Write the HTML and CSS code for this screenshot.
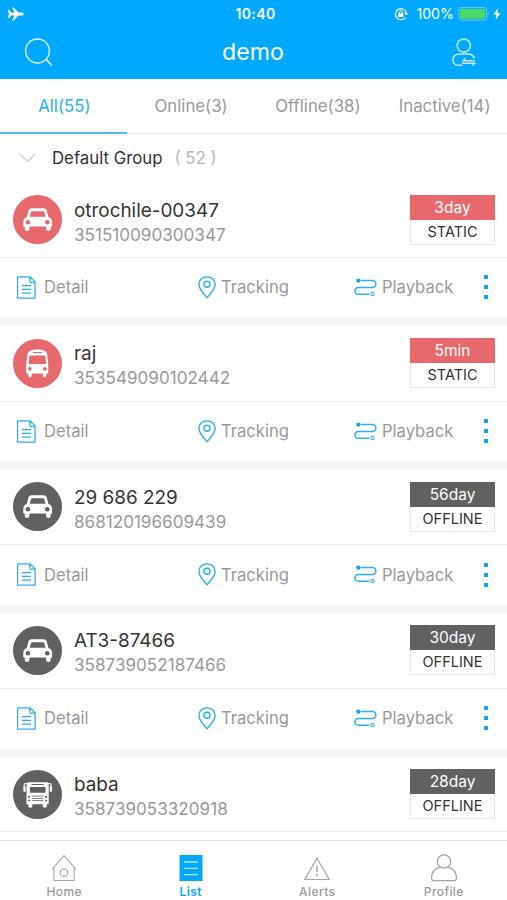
FILE: index.html
```html
<!DOCTYPE html>
<html lang="en">

<head>
    <meta charset="UTF-8">
    <meta name="viewport" content="width=device-width, initial-scale=1.0">
    <title>demo</title>
    <link rel="stylesheet" href="styles.css">
</head>

<body>
    <!-- shared icons -->
    <svg class="icon-defs" width="0" height="0">
        <symbol id="car" viewBox="0 0 49 49">
            <path fill="#fff" fill-rule="evenodd" d="M18.500 13.300h12.200c1.600 0 2.700.9 3.100 2.400l1.700 6.300c2.300.8 3.600 2.500 3.600 4.800v4.700h-1.400v2.300c0 2.900-4.600 2.900-4.600 0v-2.300H16.400v2.300c0 2.900-4.600 2.900-4.600 0v-2.300h-1.500v-4.700c0-2.300 1.300-4 3.500-4.800l1.600-6.300c.4-1.500 1.500-2.400 3.100-2.400zm.8 2.900c-.7 0-1.100.3-1.300 1L16.800 21.800h15.700l-1.200-4.600c-.2-.7-.6-1-1.300-1zM14.900 25a2.300 2.300 0 1 0 .01 0zM34.300 25a2.300 2.300 0 1 0 .01 0z" />
        </symbol>
        <symbol id="bus" viewBox="0 0 49 49">
            <path fill="#fff" fill-rule="evenodd" d="M16.500 12.300c3.500-2.500 12.500-2.500 16 0 1.200 1 1.600 2.200 1.800 4l1 9.500v8.800h-2v2c0 2.400-3.400 2.400-3.400 0v-2H18.700v2c0 2.400-3.400 2.400-3.400 0v-2h-2.200v-8.800l1.200-9.500c.2-1.800.9-3.200 2.200-4zm3.200.6v1.200h9.600v-1.200zM17.600 16.500c-.7 0-1 .3-1.100.9l-.8 6.500c-.1.700.2 1 .9 1h15.600c.7 0 1-.3.900-1l-.7-6.500c-.1-.6-.4-.9-1.100-.9zM16.900 28a1.900 1.900 0 1 0 .01 0zM31.800 28a1.900 1.900 0 1 0 .01 0z" />
        </symbol>
        <symbol id="coach" viewBox="0 0 49 49">
            <path fill="#fff" fill-rule="evenodd" d="M16 12.300h17.500c1.500 0 2.200.8 2.200 2.200v19.700h-2v2.300c0 .8-.4 1.100-1.100 1.100h-1.800c-.7 0-1-.4-1-1.100v-2.300H19.300v2.300c0 .7-.3 1.100-1 1.100h-1.800c-.7 0-1.100-.3-1.100-1.100v-2.300h-1.900V14.500c0-1.400.9-2.200 2.500-2.200zM18.500 13.900v1.100h12.300v-1.100zM16.900 17v5.700h15.600V17zM15.100 26v1.800h2V26zM32 26v1.800h2V26zM18.700 25.700v.9h11.800v-.9zM18.700 27.900v.9h11.800v-.9zM15.100 29.700v1.500h2v-1.500zM18.700 30.200v.9h11.800v-.9zM32 29.700v1.500h2v-1.500z" />
            <path fill="none" stroke="#fff" stroke-width="1.200" d="M14 13.500h-1.500q-1.300 0-1.300 1.300v6M35 13.500h1.800q1.300 0 1.300 1.300v6" />
            <path fill="#fff" d="M10.500 16.500h2.100v5.200h-2.100zM36.800 16.500h2.100v5.200h-2.100z" />
        </symbol>
        <symbol id="detail" viewBox="0 0 19 23">
            <path fill="none" stroke="#28aff9" stroke-width="1.300" stroke-linejoin="round" d="M1.200.900h11.900l5 5v15.500q0 .7-.7.700H1.200q-.7 0-.7-.7V1.600q0-.7.7-.7zM12.900 1v4.400q0 .8.800.8H18M4.900 9.700h9.200M4.900 13.400h9.200M4.900 17.100h9.200" />
        </symbol>
        <symbol id="pin" viewBox="0 0 18 23">
            <path fill="none" stroke="#28aff9" stroke-width="1.400" stroke-linejoin="round" d="M9 .900c4.700 0 8.100 3.300 8.100 7.700 0 4.700-4.300 8.800-8.100 13.200C5.200 17.400.900 13.300.900 8.600.900 4.200 4.300.900 9 .900z" />
            <circle cx="9" cy="8.300" r="3" fill="none" stroke="#28aff9" stroke-width="1.400" />
        </symbol>
        <symbol id="route" viewBox="0 0 23 19">
            <path fill="none" stroke="#28aff9" stroke-width="1.500" stroke-linecap="round" d="M7.800 2.600h10.600a3.400 3.400 0 0 1 0 6.900H4.300a3.400 3.400 0 0 0 0 6.800h10.400" />
            <circle cx="4.400" cy="2.600" r="2.200" fill="#16a5f2" />
            <circle cx="18.500" cy="16" r="1.600" fill="none" stroke="#4dbcfa" stroke-width="1.200" />
        </symbol>
    </svg>

    <div class="app">
        <header class="header">
            <div class="status-bar">
                <svg class="plane" viewBox="0 0 16 14">
                    <path fill="#fff" d="M0 3h1.300l2 2.600h3.200L4.100.4h1.700l4.500 5.200h3.700c2.300.2 2.300 2.600 0 2.800h-3.700l-4.500 5.200H4.100l2.400-5.200H3.300L1.300 11H0l.9-4z" />
                </svg>
                <span class="time">10:40</span>
                <div class="status-right">
                    <svg class="lock" viewBox="0 0 14 14">
                        <path fill="none" stroke="#fff" stroke-width="1.200" d="M11.300 10.600A5.500 5.500 0 1 1 12.400 6.500" />
                        <path fill="#fff" d="M10.600 6h3.400l-1.700 2.600zM4.200 6.200h5.200v3.900H4.200z" />
                        <path fill="none" stroke="#fff" stroke-width="1" d="M5.200 6.400V5.300a1.600 1.600 0 0 1 3.200 0v1.100" />
                    </svg>
                    <span class="percent">100%</span>
                    <svg class="battery" viewBox="0 0 32 14">
                        <rect x=".6" y=".6" width="28" height="12.600" rx="2.600" fill="none" stroke="#7cc5c8" stroke-width="1" />
                        <rect x="2" y="2" width="25.200" height="9.800" rx="1" fill="#4cd964" />
                        <path fill="#7cc5e0" d="M29.800 4.800q1.800 2.100 0 4.200z" />
                    </svg>
                    <svg class="bolt" viewBox="0 0 8 12">
                        <path fill="#fff" d="M5 0L.5 6.600h2.900L2.600 12l4.900-7H4.500z" />
                    </svg>
                </div>
            </div>
            <div class="nav-bar">
                <svg class="search" viewBox="0 0 30 30">
                    <circle cx="12.500" cy="13" r="11.900" fill="none" stroke="#d5f1ff" stroke-width="1.500" />
                    <path stroke="#d5f1ff" stroke-width="1.700" d="M20.800 21.300l6.300 6.200" />
                </svg>
                <h1 class="title">demo</h1>
                <svg class="switch-user" viewBox="0 0 26 30">
                    <g fill="none" stroke="#c4ebff" stroke-width="1.500">
                        <circle cx="12.800" cy="7.500" r="6.600" />
                        <path d="M11.200 27.300H7.500c-3.700 0-5.600-2.200-5.600-5.300 0-4.200 3.200-6 7-6h8.300c3.100 0 5.200 1.500 6.200 4.500" />
                        <path stroke-width="1.400" d="M23.800 22.700H12l2.500-2.500M11 25.200h12.800l-2.600 2.400" />
                    </g>
                </svg>
            </div>
        </header>

        <nav class="tabs">
            <a class="tab active"><span>All(55)</span></a>
            <a class="tab"><span>Online(3)</span></a>
            <a class="tab"><span>Offline(38)</span></a>
            <a class="tab"><span>Inactive(14)</span></a>
        </nav>

        <main class="list">
            <div class="group">
                <svg class="chevron" viewBox="0 0 17 10">
                    <path fill="none" stroke="#ccc" stroke-width="1.200" d="M.7.8l7.800 7.700L16.300.8" />
                </svg>
                <span class="group-name">Default Group</span>
                <span class="group-count">( 52 )</span>
            </div>

            <section class="card">
                <div class="device">
                    <svg class="avatar red"><use href="#car" /></svg>
                    <div class="info">
                        <div class="name">otrochile-00347</div>
                        <div class="imei">351510090300347</div>
                    </div>
                    <div class="badge red">
                        <div class="since">3day</div>
                        <div class="state">STATIC</div>
                    </div>
                </div>
                <div class="actions">
                    <a class="action"><svg class="i-detail"><use href="#detail" /></svg>Detail</a>
                    <a class="action"><svg class="i-pin"><use href="#pin" /></svg>Tracking</a>
                    <a class="action"><svg class="i-route"><use href="#route" /></svg>Playback</a>
                    <div class="more"><i></i><i></i><i></i></div>
                </div>
            </section>

            <section class="card">
                <div class="device">
                    <svg class="avatar red"><use href="#bus" /></svg>
                    <div class="info">
                        <div class="name">raj</div>
                        <div class="imei">353549090102442</div>
                    </div>
                    <div class="badge red">
                        <div class="since">5min</div>
                        <div class="state">STATIC</div>
                    </div>
                </div>
                <div class="actions">
                    <a class="action"><svg class="i-detail"><use href="#detail" /></svg>Detail</a>
                    <a class="action"><svg class="i-pin"><use href="#pin" /></svg>Tracking</a>
                    <a class="action"><svg class="i-route"><use href="#route" /></svg>Playback</a>
                    <div class="more"><i></i><i></i><i></i></div>
                </div>
            </section>

            <section class="card">
                <div class="device">
                    <svg class="avatar gray"><use href="#car" /></svg>
                    <div class="info">
                        <div class="name">29 686 229</div>
                        <div class="imei">868120196609439</div>
                    </div>
                    <div class="badge gray">
                        <div class="since">56day</div>
                        <div class="state">OFFLINE</div>
                    </div>
                </div>
                <div class="actions">
                    <a class="action"><svg class="i-detail"><use href="#detail" /></svg>Detail</a>
                    <a class="action"><svg class="i-pin"><use href="#pin" /></svg>Tracking</a>
                    <a class="action"><svg class="i-route"><use href="#route" /></svg>Playback</a>
                    <div class="more"><i></i><i></i><i></i></div>
                </div>
            </section>

            <section class="card">
                <div class="device">
                    <svg class="avatar gray"><use href="#car" /></svg>
                    <div class="info">
                        <div class="name">AT3-87466</div>
                        <div class="imei">358739052187466</div>
                    </div>
                    <div class="badge gray">
                        <div class="since">30day</div>
                        <div class="state">OFFLINE</div>
                    </div>
                </div>
                <div class="actions">
                    <a class="action"><svg class="i-detail"><use href="#detail" /></svg>Detail</a>
                    <a class="action"><svg class="i-pin"><use href="#pin" /></svg>Tracking</a>
                    <a class="action"><svg class="i-route"><use href="#route" /></svg>Playback</a>
                    <div class="more"><i></i><i></i><i></i></div>
                </div>
            </section>

            <section class="card">
                <div class="device">
                    <svg class="avatar gray"><use href="#coach" /></svg>
                    <div class="info">
                        <div class="name">baba</div>
                        <div class="imei">358739053320918</div>
                    </div>
                    <div class="badge gray">
                        <div class="since">28day</div>
                        <div class="state">OFFLINE</div>
                    </div>
                </div>
            </section>
        </main>

        <footer class="tab-bar">
            <a class="bar-item">
                <svg viewBox="0 0 28 28">
                    <path fill="none" stroke="#a5a5a5" stroke-width="1.100" d="M2 15.500L14 1.700l12 13.800M3.900 13.400v13.100h20.300V13.400" />
                    <circle cx="14" cy="18.500" r="3.800" fill="none" stroke="#a5a5a5" stroke-width="1.100" />
                </svg>
                <span>Home</span>
            </a>
            <a class="bar-item active">
                <svg viewBox="0 0 28 28">
                    <path fill="#00a8ff" d="M2.500 1h23v26h-23z" />
                    <path stroke="#b5e5ff" stroke-width="1.300" d="M7 8h14M7 14.300h14M7 20.600h14" />
                </svg>
                <span>List</span>
            </a>
            <a class="bar-item">
                <svg viewBox="0 0 28 28">
                    <path fill="none" stroke="#a5a5a5" stroke-width="1.200" d="M14 4.300l12.200 21.200H1.800z" />
                    <path stroke="#a5a5a5" stroke-width="1.500" d="M14 12v6.300M14 20v2.200" />
                </svg>
                <span>Alerts</span>
            </a>
            <a class="bar-item">
                <svg viewBox="0 0 28 28">
                    <circle cx="14" cy="7.500" r="6.700" fill="none" stroke="#a5a5a5" stroke-width="1.200" />
                    <path fill="none" stroke="#a5a5a5" stroke-width="1.200" d="M9.800 13.200C4.700 14.700 1.500 19 1.500 24q0 2.700 2.500 2.700h20q2.500 0 2.500-2.700c0-5-3.200-9.300-8.300-10.800" />
                </svg>
                <span>Profile</span>
            </a>
        </footer>
    </div>
</body>

</html>
```
FILE: styles.css
```css
* {
    box-sizing: border-box;
}

body {
    margin: 0;
    font-family: Inter, "Liberation Sans", sans-serif;
    background-color: #fff;
    color: #333;
}

svg {
    display: block;
    flex: none;
}

.icon-defs {
    position: absolute;
}

.app {
    display: flex;
    flex-direction: column;
    width: 507px;
    height: 900px;
    overflow: hidden;
}

/* header */
.header {
    flex: none;
    height: 79px;
    background-color: #00a8ff;
    color: #fff;
}

.status-bar {
    display: grid;
    grid-template-columns: 1fr auto 1fr;
    align-items: center;
    height: 27px;
    padding: 0 6px 0 8px;
}

.plane {
    width: 16px;
    height: 14px;
}

.time {
    font-size: 14px;
    font-weight: 600;
    letter-spacing: 0.4px;
    padding-left: 2px;
}

.status-right {
    display: flex;
    justify-content: flex-end;
    align-items: center;
}

.lock {
    width: 14px;
    height: 14px;
    margin-right: 8px;
}

.percent {
    font-size: 14.2px;
    margin-right: 4px;
}

.battery {
    width: 32px;
    height: 14px;
    margin-right: 3px;
}

.bolt {
    width: 8px;
    height: 12px;
}

.nav-bar {
    display: flex;
    justify-content: space-between;
    align-items: center;
    height: 52px;
    padding: 0 30px 0 25px;
}

.search {
    width: 30px;
    height: 30px;
}

.title {
    margin: 0;
    font-size: 23.2px;
    font-weight: 400;
    line-height: 50px;
    padding-bottom: 2px;
}

.switch-user {
    width: 26px;
    height: 30px;
}

/* filter tabs */
.tabs {
    flex: none;
    display: grid;
    grid-template-columns: repeat(4, 1fr);
    height: 55px;
    border-bottom: 1px solid #e8e8e8;
}

.tab {
    display: flex;
    justify-content: center;
    align-items: center;
    height: 55px;
    padding: 0 0 2px 2px;
    font-size: 16.8px;
    color: #999;
    white-space: nowrap;
}

.tab.active {
    padding-bottom: 0;
    color: #28aff9;
    border-bottom: 2px solid #4dbcf8;
}

/* device list */
.list {
    flex: 1;
    min-height: 0;
    overflow: hidden;
}

.group {
    display: flex;
    align-items: center;
    height: 48.4px;
    padding-left: 19px;
    font-size: 16.8px;
}

.chevron {
    width: 17px;
    height: 10px;
    margin-right: 16px;
}

.group-name {
    margin-right: 12px;
}

.group-count {
    color: #b5b5b5;
}

.card {
    height: 143.6px;
    border-bottom: 8px solid #f6f6f6;
}

.device {
    display: flex;
    align-items: center;
    height: 75.6px;
    padding: 0 12px 0 13px;
    border-bottom: 1px solid #ededed;
}

.avatar {
    width: 49px;
    height: 49px;
    margin-right: 12px;
    border-radius: 50%;
}

.avatar.red {
    background-color: #e8696d;
}

.avatar.gray {
    background-color: #616161;
}

.info {
    flex: 1;
    padding-top: 6px;
}

.name {
    font-size: 18.9px;
    line-height: 24px;
}

.imei {
    font-size: 17.1px;
    line-height: 24px;
    color: #999;
}

.badge {
    width: 85px;
    height: 50px;
    border: 1px solid #e8e8e8;
    text-align: center;
}

.since {
    height: 25px;
    margin: -1px -1px 0;
    font-size: 15.5px;
    line-height: 25px;
    color: #fff;
}

.badge.red .since {
    background-color: #e8696d;
}

.badge.gray .since {
    background-color: #616161;
}

.state {
    font-size: 14.5px;
    line-height: 24px;
}

.actions {
    display: grid;
    grid-template-columns: 181px 156px 130px 5px;
    align-items: center;
    height: 59px;
    padding-left: 17px;
}

.action {
    display: flex;
    align-items: center;
    font-size: 16.6px;
    color: #999;
}

.i-detail {
    width: 19px;
    height: 23px;
    margin-right: 8px;
}

.i-pin {
    width: 18px;
    height: 23px;
    margin-right: 5px;
}

.i-route {
    width: 23px;
    height: 19px;
    margin-right: 5px;
}

.more {
    display: flex;
    flex-direction: column;
    gap: 6px;
}

.more i {
    width: 4px;
    height: 4px;
    background-color: #16a5f2;
}

/* bottom bar */
.tab-bar {
    flex: none;
    display: grid;
    grid-template-columns: repeat(4, 1fr);
    height: 60px;
    padding-left: 1px;
    border-top: 1px solid #e2e2e2;
    background-color: #fff;
}

.bar-item {
    display: flex;
    flex-direction: column;
    align-items: center;
    padding-top: 13px;
    font-size: 12px;
    font-weight: 500;
    line-height: 15px;
    letter-spacing: 0.4px;
    color: #999;
}

.bar-item svg {
    width: 28px;
    height: 28px;
    margin-bottom: 2px;
}

.bar-item.active {
    color: #00a8ff;
    font-weight: 600;
}
```
